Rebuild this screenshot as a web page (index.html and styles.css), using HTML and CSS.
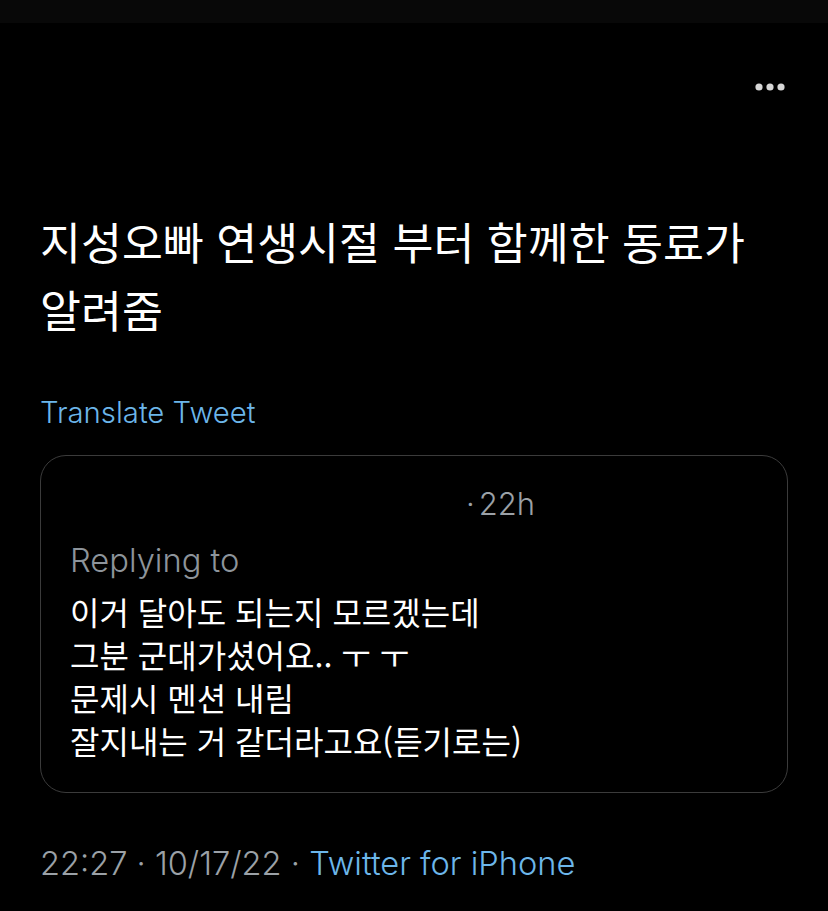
FILE: index.html
```html
<!DOCTYPE html>
<html lang="ko">

<head>
    <meta charset="UTF-8">
    <meta name="viewport" content="width=device-width, initial-scale=1.0">
    <title>Tweet</title>
    <link rel="stylesheet" href="styles.css">
</head>

<body>
    <div class="status-strip"></div>

    <div class="tweet">
        <div class="tweet-top">
            <svg class="more" width="30" height="8" viewBox="0 0 30 8">
                <circle cx="4" cy="4" r="3.6" />
                <circle cx="15" cy="4" r="3.6" />
                <circle cx="26" cy="4" r="3.6" />
            </svg>
        </div>

        <p class="tweet-text">지성오빠 연생시절 부터 함께한 동료가<br>알려줌</p>

        <a class="translate">Translate Tweet</a>

        <div class="quote">
            <div class="quote-head"><span class="dot">·</span>22h</div>
            <div class="replying">Replying to</div>
            <p class="quote-text">이거 달아도 되는지 모르겠는데<br>그분 군대가셨어요.. ㅜ ㅜ<br>문제시 멘션 내림<br>잘지내는 거 같더라고요(듣기로는)</p>
        </div>

        <div class="meta">22:27 · 10/17/22 · <span class="source">Twitter for iPhone</span></div>
    </div>
</body>

</html>
```

FILE: styles.css
```css
body {
    margin: 0;
    background: #000;
    color: #fff;
    font-family: "Inter", "Noto Sans CJK KR", sans-serif;
}

.status-strip {
    height: 23px;
    background: #080808;
}

.tweet {
    padding: 0 40px;
}

.tweet-top {
    display: flex;
    justify-content: flex-end;
    padding-top: 60px;
    padding-right: 3px;
}

.more {
    fill: #d6d6d6;
}

.tweet-text {
    margin: 116px 0 0;
    font-family: "Noto Sans CJK KR", sans-serif;
    font-size: 44.5px;
    line-height: 68px;
}

.translate {
    display: block;
    margin-top: 54px;
    color: #6cb6ea;
    font-size: 29.3px;
    font-weight: 300;
    line-height: 32px;
}

.quote {
    margin-top: 26px;
    border: 1px solid #3b3b3b;
    border-radius: 26px;
    padding: 30px 29px 30px;
}

.quote-head {
    color: #9ba1a7;
    font-size: 31px;
    font-weight: 300;
    line-height: 36px;
    padding-left: 396px;
}

.dot {
    margin-right: 4px;
}

.replying {
    margin-top: 20px;
    color: #8d949b;
    font-size: 32.7px;
    font-weight: 300;
    line-height: 36px;
}

.quote-text {
    margin: 12px 0 0;
    font-family: "Noto Sans CJK KR", sans-serif;
    font-size: 32px;
    line-height: 43px;
}

.meta {
    margin-top: 50px;
    color: #9ba1a7;
    font-size: 32.6px;
    font-weight: 300;
    line-height: 40px;
}

.source {
    color: #6cb6ea;
}
```
